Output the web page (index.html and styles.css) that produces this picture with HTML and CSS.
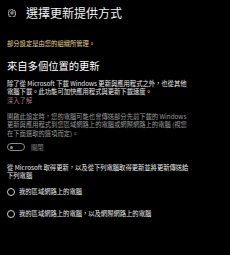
FILE: index.html
```html
<!DOCTYPE html>
<html lang="zh-Hant">
<head>
<meta charset="utf-8">
<link rel="stylesheet" href="styles.css">
</head>
<body>
<div class="page">
  <header class="header">
    <svg class="gear" viewBox="0 0 16 16" width="8" height="8">
      <g fill="none" stroke="#fff" stroke-width="1.4">
        <circle cx="8" cy="8" r="2.4"/>
        <path d="M6.7 1.2h2.6l.4 1.9 1.3.6 1.7-1 1.8 1.8-1 1.7.6 1.3 1.9.4v2.6l-1.9.4-.6 1.3 1 1.7-1.8 1.8-1.7-1-1.3.6-.4 1.9H6.7l-.4-1.9-1.3-.6-1.7 1-1.8-1.8 1-1.7-.6-1.3-1.9-.4V6.7l1.9-.4.6-1.3-1-1.7 1.8-1.8 1.7 1 1.3-.6z"/>
      </g>
    </svg>
    <h1 class="title">選擇更新提供方式</h1>
  </header>

  <p class="notice">部分設定是由您的組織所管理。</p>

  <h2 class="heading">來自多個位置的更新</h2>

  <p class="text">除了從 Microsoft 下載 Windows 更新與應用程式之外，也從其他<br>電腦下載。此功能可加快應用程式與更新下載速度。<br><a class="link">深入了解</a></p>

  <p class="text muted">開啟此設定時，您的電腦可能也會傳送部分先前下載的 Windows<br>更新與應用程式到您區域網路上的電腦或網際網路上的電腦 (視您<br>在下面選取的選項而定)。</p>

  <div class="toggle-row">
    <span class="toggle"><span class="knob"></span></span>
    <span class="toggle-label">關閉</span>
  </div>

  <p class="text text-b">從 Microsoft 取得更新，以及從下列電腦取得更新並將更新傳送給<br>下列電腦</p>

  <div class="radio-row r1">
    <span class="radio"></span>
    <span class="radio-label">我的區域網路上的電腦</span>
  </div>
  <div class="radio-row r2">
    <span class="radio"></span>
    <span class="radio-label">我的區域網路上的電腦，以及網際網路上的電腦</span>
  </div>
</div>
</body>
</html>
```

FILE: styles.css
```css
html, body {
  margin: 0;
  padding: 0;
  background: #000;
}
body {
  font-family: "Noto Sans CJK TC", "Noto Sans", sans-serif;
  color: #fff;
  width: 230px;
  height: 255px;
  overflow: hidden;
}
.page {
  padding-left: 7px;
}
.header {
  display: flex;
  align-items: center;
  height: 26px;
}
.gear {
  margin-left: 1px;
  flex: none;
}
.title {
  margin: 0 0 0 10px;
  font-size: 12px;
  font-weight: 400;
  line-height: 14px;
  color: #f2f2f2;
}
.notice {
  margin: 12.5px 0 0;
  font-size: 6.3px;
  line-height: 9px;
  color: #e6d68a;
  white-space: nowrap;
}
.heading {
  margin: 11px 0 0;
  font-size: 10.3px;
  font-weight: 400;
  line-height: 13px;
  color: #fff;
}
.text {
  margin: 8px 0 0;
  font-size: 6.3px;
  line-height: 8.5px;
  color: #eaeaea;
  white-space: nowrap;
}
.link {
  color: #a8787c;
}
.muted {
  margin-top: 7.5px;
  color: #9a9a9a;
}
.toggle-row {
  display: flex;
  align-items: center;
  margin-top: 5px;
  height: 8px;
}
.toggle {
  box-sizing: border-box;
  width: 18px;
  height: 8px;
  border: 1px solid #8a8a8a;
  border-radius: 4px;
  display: flex;
  align-items: center;
  padding-left: 2px;
}
.knob {
  width: 3px;
  height: 3px;
  border-radius: 50%;
  background: #8a8a8a;
}
.toggle-label {
  margin-left: 6px;
  font-size: 6.3px;
  color: #8a8a8a;
}
.text-b {
  margin-top: 12.5px;
}
.radio-row {
  display: flex;
  align-items: center;
  height: 8px;
}
.r1 {
  margin-top: 7px;
}
.r2 {
  margin-top: 14px;
}
.radio {
  box-sizing: border-box;
  width: 8px;
  height: 8px;
  border: 1px solid #d0d0d0;
  border-radius: 50%;
  flex: none;
}
.radio-label {
  margin-left: 4px;
  font-size: 6.3px;
  color: #eaeaea;
  white-space: nowrap;
}
```
